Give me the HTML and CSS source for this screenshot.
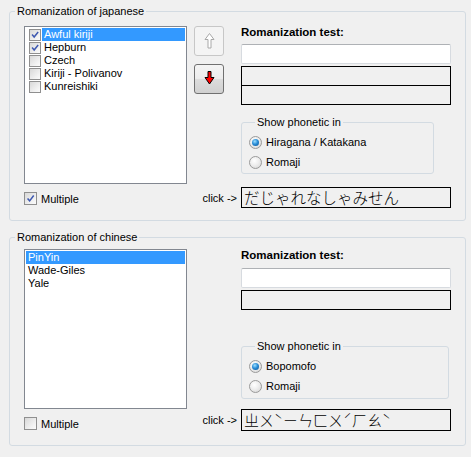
FILE: index.html
```html
<!DOCTYPE html>
<html>
<head>
<meta charset="utf-8">
<link rel="stylesheet" href="styles.css">
</head>
<body>
<div class="page">
  <fieldset class="group group-jp">
    <legend>Romanization of japanese</legend>
    <div class="grid">
      <div class="list list-jp">
        <div class="item"><span class="cb cb-small"><svg viewBox="0 0 12 12"><path d="M2.5 5.5 L5 8.5 L9.8 2.5" /></svg></span><span class="text sel">Awful kiriji</span></div>
        <div class="item"><span class="cb cb-small"><svg viewBox="0 0 12 12"><path d="M2.5 5.5 L5 8.5 L9.8 2.5" /></svg></span><span class="text">Hepburn</span></div>
        <div class="item"><span class="cb cb-small"></span><span class="text">Czech</span></div>
        <div class="item"><span class="cb cb-small"></span><span class="text">Kiriji - Polivanov</span></div>
        <div class="item"><span class="cb cb-small"></span><span class="text">Kunreishiki</span></div>
      </div>
      <div class="arrows">
        <div class="btn btn-disabled"><svg width="11" height="16" viewBox="0 0 11 16"><polygon points="5.5,0.5 10,6.5 7,6.5 7,15 4,15 4,6.5 1,6.5" /></svg></div>
        <div class="btn btn-normal"><svg width="11" height="14" viewBox="0 0 11 14"><polygon points="4,0.5 7,0.5 7,6.5 10,6.5 5.5,13 1,6.5 4,6.5" /></svg></div>
      </div>
      <div class="test test-jp">
        <div class="title">Romanization test:</div>
        <div class="input"></div>
        <div class="outs">
          <div class="out"></div>
          <div class="out"></div>
        </div>
        <fieldset class="phon phon-jp">
          <legend>Show phonetic in</legend>
          <div class="radio-row"><span class="radio on"></span>Hiragana / Katakana</div>
          <div class="radio-row"><span class="radio"></span>Romaji</div>
        </fieldset>
      </div>
      <div class="multi multi-jp"><span class="cb"><svg viewBox="0 0 13 13"><path d="M3 6.5 L5.5 9.3 L10.3 3" /></svg></span>Multiple</div>
      <div class="click">click -&gt;</div>
      <div class="result result-jp">だじゃれなしゃみせん</div>
    </div>
  </fieldset>

  <fieldset class="group group-cn">
    <legend>Romanization of chinese</legend>
    <div class="grid">
      <div class="list list-cn">
        <div class="item"><span class="text sel">PinYin</span></div>
        <div class="item"><span class="text">Wade-Giles</span></div>
        <div class="item"><span class="text">Yale</span></div>
      </div>
      <div class="test test-cn">
        <div class="title">Romanization test:</div>
        <div class="input"></div>
        <div class="outs">
          <div class="out"></div>
        </div>
        <fieldset class="phon phon-cn">
          <legend>Show phonetic in</legend>
          <div class="radio-row"><span class="radio on"></span>Bopomofo</div>
          <div class="radio-row"><span class="radio"></span>Romaji</div>
        </fieldset>
      </div>
      <div class="multi multi-cn"><span class="cb"></span>Multiple</div>
      <div class="click">click -&gt;</div>
      <div class="result result-cn">ㄓㄨˋㄧㄣㄈㄨˊㄏㄠˋ</div>
    </div>
  </fieldset>
</div>
</body>
</html>
```

FILE: styles.css
```css
html, body {
  margin: 0;
  padding: 0;
  background: #f0f0f0;
}
body {
  font-family: "Liberation Sans", Arial, sans-serif;
  font-size: 11px;
  color: #000;
}
.page {
  padding: 5px 5px 0 9px;
  display: flex;
  flex-direction: column;
  gap: 10px;
}
.group {
  margin: 0;
  padding: 0;
  width: 457px;
  box-sizing: border-box;
  border: 1px solid #d3dbe2;
  border-radius: 3px;
  min-width: 0;
}
.group > legend {
  margin-left: 5px;
  padding: 0 2px;
  line-height: 13px;
}
.grid {
  display: grid;
  grid-template-columns: 163px 7px 30px 17px 210px;
  padding-left: 14px;
}
.group-jp .grid {
  padding-top: 8px;
  padding-bottom: 12px;
  row-gap: 3px;
}
.group-cn .grid {
  padding-top: 5px;
  padding-bottom: 14px;
  row-gap: 0;
}
.list {
  grid-column: 1;
  grid-row: 1;
  background: #fff;
  border: 1px solid #828790;
  box-sizing: border-box;
  padding: 0 1px;
}
.list-jp { height: 158px; }
.list-cn { height: 160px; padding-top: 1px; }
.item {
  display: flex;
  align-items: center;
  height: 13px;
  line-height: 13px;
}
.list-jp .item:first-child { margin-top: 1px; }
.text {
  flex: 1;
  padding-left: 2px;
  height: 13px;
  white-space: nowrap;
}
.list-jp .text { margin-left: 1px; }
.text.sel {
  background: #3399ff;
  color: #fff;
}
.cb {
  width: 13px;
  height: 13px;
  box-sizing: border-box;
  border: 1px solid #8f8f8f;
  background: linear-gradient(135deg, #d8d8d8 0%, #f2f2f2 70%, #fbfbfb 100%);
  display: inline-flex;
  flex: none;
}
.cb-small {
  width: 12px;
  height: 12px;
  margin-left: 3px;
}
.cb svg {
  width: 100%;
  height: 100%;
}
.cb path {
  fill: none;
  stroke: #3e58b0;
  stroke-width: 1.8;
}
.arrows {
  grid-column: 3;
  grid-row: 1;
  display: flex;
  flex-direction: column;
  gap: 8px;
}
.btn {
  width: 30px;
  height: 30px;
  box-sizing: border-box;
  border-radius: 3px;
  display: flex;
  align-items: center;
  justify-content: center;
}
.btn-disabled {
  border: 1px solid #c7c7c7;
  background: #f4f4f4;
}
.btn-disabled polygon {
  fill: #fff;
  stroke: #a8a8a8;
  stroke-width: 1;
}
.btn-normal {
  border: 1px solid #707070;
  background: linear-gradient(#f4f4f4 0%, #ececec 48%, #dcdcdc 52%, #d0d0d0 100%);
  padding-bottom: 3px;
}
.btn-normal polygon {
  fill: #ff0000;
  stroke: #000;
  stroke-width: 1;
}
.test {
  grid-column: 5;
  grid-row: 1;
  display: flex;
  flex-direction: column;
}
.title {
  font-weight: bold;
  line-height: 13px;
  font-size: 11.5px;
}
.input {
  height: 20px;
  box-sizing: border-box;
  background: #fff;
  border: 1px solid #d7dbe0;
  border-top-color: #aeb1b5;
  border-radius: 2px;
  margin-top: 5px;
}
.test-cn .input { margin-top: 6px; }
.outs {
  margin-top: 2px;
  display: flex;
  flex-direction: column;
}
.out {
  height: 20px;
  box-sizing: border-box;
  border: 1px solid #000;
}
.out + .out { margin-top: -1px; }
.phon {
  margin: 0;
  padding: 5px 0 3px 7px;
  border: 1px solid #d3dbe2;
  border-radius: 3px;
  box-sizing: border-box;
  min-width: 0;
  display: flex;
  flex-direction: column;
  gap: 4px;
}
.phon > legend {
  margin-left: 6px;
  padding: 0 2px;
  line-height: 13px;
}
.phon-jp { width: 193px; margin-top: 11px; }
.phon-cn { width: 208px; margin-top: 30px; padding-top: 5px; padding-bottom: 4px; }
.radio-row {
  display: flex;
  align-items: center;
  height: 16px;
  gap: 4px;
}
.radio {
  width: 13px;
  height: 13px;
  box-sizing: border-box;
  border-radius: 50%;
  border: 1px solid #9a9a9a;
  background: radial-gradient(circle at 40% 35%, #ffffff 0%, #eeeeee 45%, #d2d2d2 100%);
  display: flex;
  align-items: center;
  justify-content: center;
}
.radio.on::after {
  content: "";
  width: 7px;
  height: 7px;
  border-radius: 50%;
  background: radial-gradient(circle at 40% 35%, #9fe0ff 0%, #2a8ed8 45%, #0a4d8c 100%);
}
.multi {
  grid-column: 1;
  grid-row: 2;
  display: flex;
  align-items: center;
  gap: 4px;
  align-self: start;
}
.multi-jp { margin-top: 5px; }
.multi-cn { margin-top: 8px; }
.click {
  grid-column: 2 / 5;
  grid-row: 2;
  justify-self: end;
  align-self: center;
  margin-right: 4px;
}
.result {
  grid-column: 5;
  grid-row: 2;
  border: 1px solid #000;
  box-sizing: border-box;
  font-family: "Noto Sans CJK JP", "Noto Sans CJK TC", sans-serif;
  font-weight: 300;
  padding-left: 2px;
  white-space: nowrap;
  overflow: hidden;
}
.result-jp {
  height: 21px;
  font-size: 15.5px;
  line-height: 18px;
}
.result-cn {
  height: 22px;
  font-size: 15px;
  line-height: 19px;
  font-family: "Noto Sans CJK TC", sans-serif;
}
```
